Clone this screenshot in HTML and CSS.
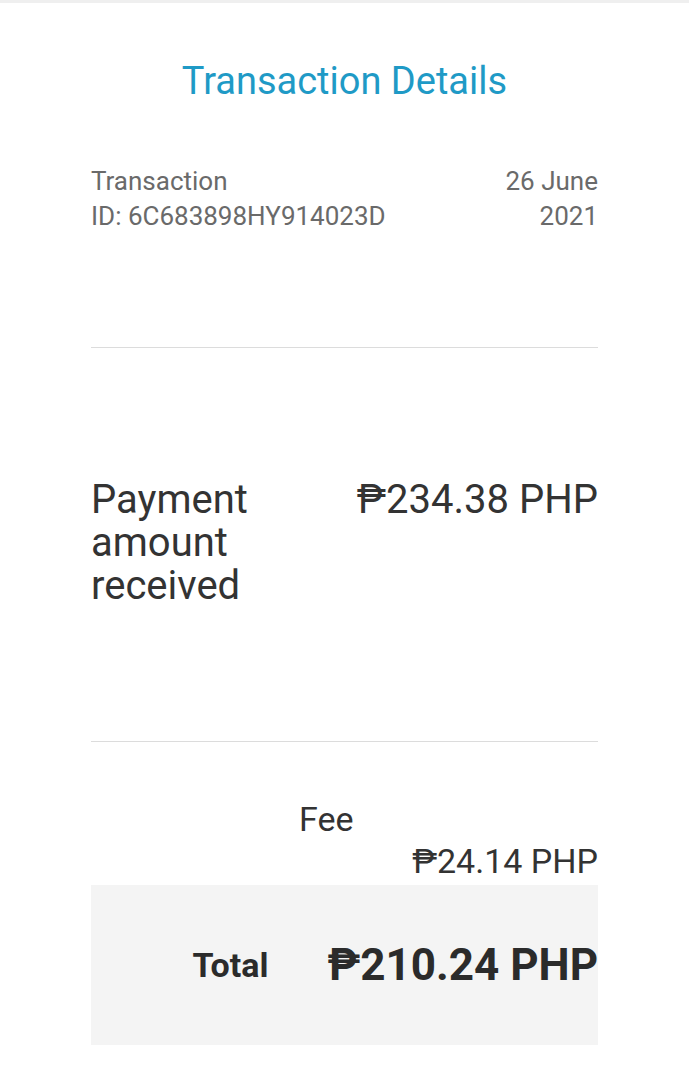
FILE: index.html
```html
<!DOCTYPE html>
<html>
  <head>
  <meta name="viewport" content="width=device-width, initial-scale=1.0">
  <meta charset="UTF-8">
  <link rel="stylesheet" href="styles.css">
  </head>
<body>

<div id="txn-container">
    <h1 class="txn-title">Transaction Details</h1>

    <div class="txn-meta">
        <div class="txn-id">
            <span class="txn-id-label">Transaction</span>
            <span class="txn-id-value">ID: 6C683898HY914023D</span>
        </div>
        <div class="txn-date">26 June 2021</div>
    </div>

    <div class="txn-row txn-payment">
        <div class="txn-label">Payment amount received</div>
        <div class="txn-value">&#8369;234.38 PHP</div>
    </div>

    <div class="txn-fee">
        <div class="fee-label">Fee</div>
        <div class="fee-value">&#8369;24.14 PHP</div>
    </div>

    <div class="txn-total">
        <div class="total-label">Total</div>
        <div class="total-value">&#8369;210.24 PHP</div>
    </div>
</div>

</body>
</html>
```

FILE: styles.css
```css
body{
margin: 0;
background-color: #fff;
border-top: 3px solid #efefef;
font-family: Roboto, "Noto Sans", sans-serif;
}

#txn-container{
width: 507px;
margin: 0 auto;
}

.txn-title{
margin: 55px 0 0 0;
font-size: 38px;
line-height: 46px;
font-weight: normal;
text-align: center;
color: #1f9ac6;
}

.txn-meta{
display: flex;
justify-content: space-between;
margin-top: 60px;
padding-bottom: 113px;
border-bottom: 1px solid #dcdcdc;
font-size: 26px;
line-height: 35px;
color: #6a6a6a;
}

.txn-id span{
display: block;
}

.txn-date{
width: 110px;
text-align: right;
}

.txn-row{
display: flex;
justify-content: space-between;
}

.txn-payment{
padding: 130px 0 134px 0;
border-bottom: 1px solid #dcdcdc;
font-size: 40px;
line-height: 43px;
color: #333;
}

.txn-payment .txn-label{
width: 200px;
}

.txn-fee{
padding-top: 56px;
font-size: 34px;
line-height: 42px;
color: #333;
}

.fee-label{
padding-left: 208px;
}

.fee-value{
text-align: right;
}

.txn-total{
display: flex;
align-items: center;
justify-content: flex-end;
gap: 59px;
height: 160px;
margin-top: 3px;
background-color: #f4f4f4;
color: #2b2b2b;
font-weight: bold;
}

.total-label{
font-size: 34px;
}

.total-value{
font-size: 44px;
}
```
